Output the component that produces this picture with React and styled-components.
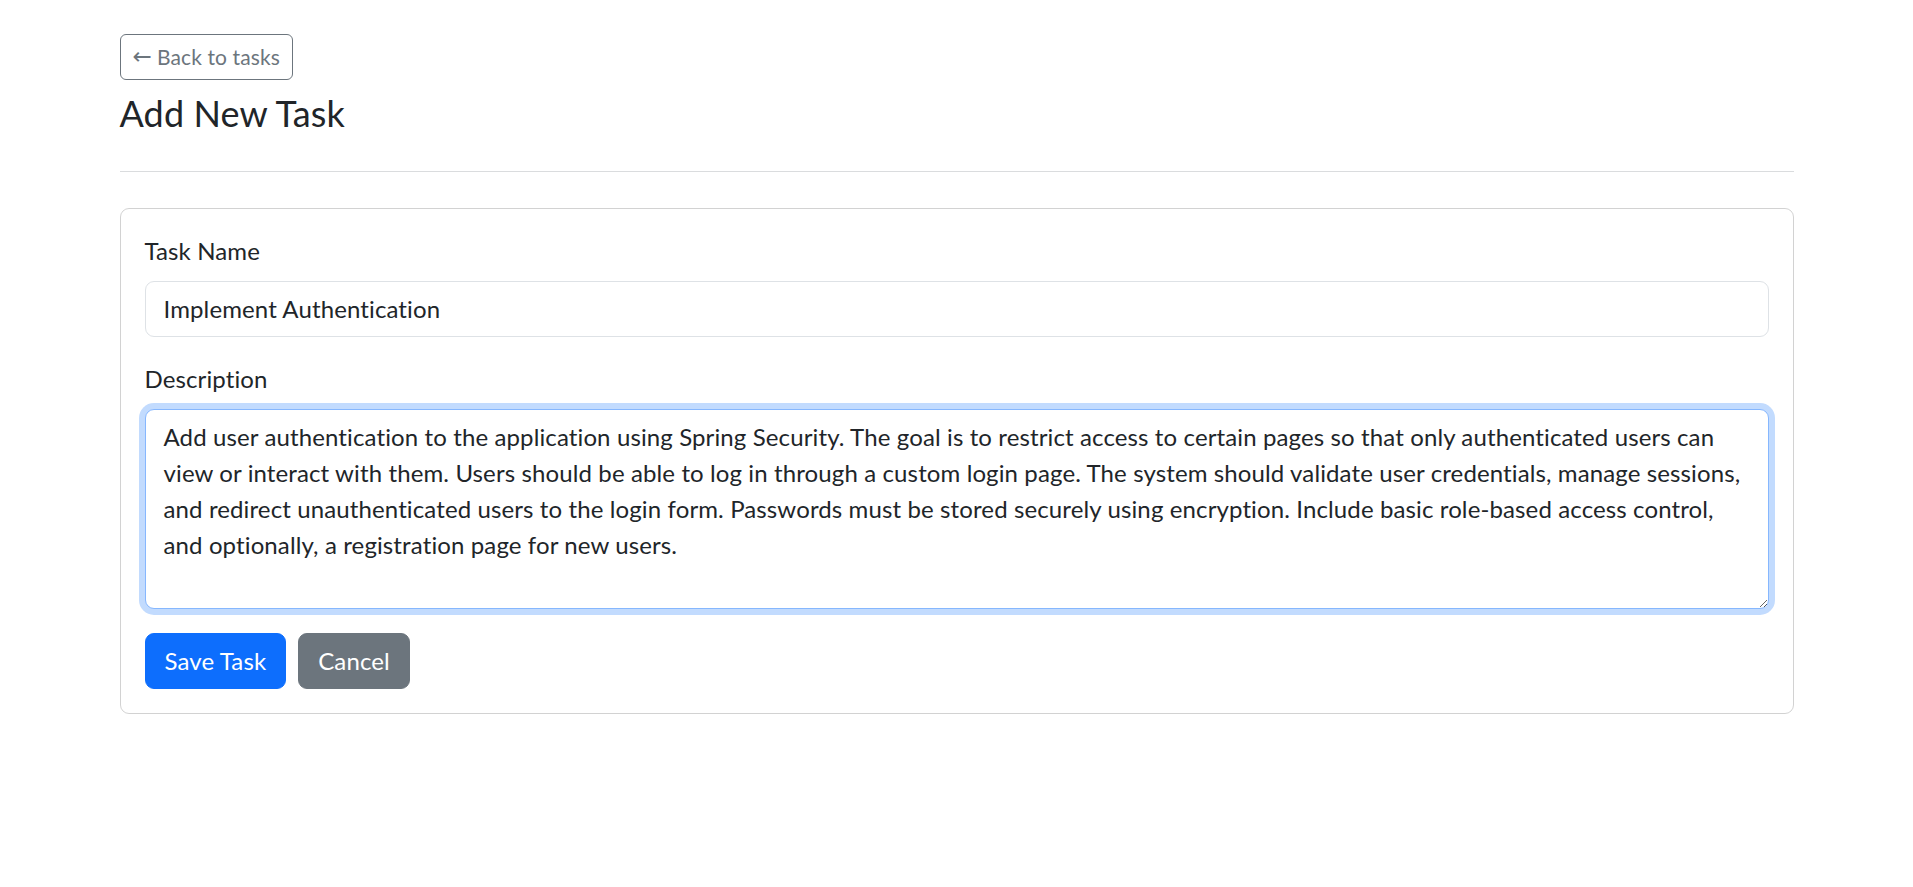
import styled, { createGlobalStyle } from "styled-components";

const GlobalStyle = createGlobalStyle`
  *, *::before, *::after {
    box-sizing: border-box;
  }
  body {
    margin: 0;
    background: #fff;
    color: #212529;
    font-family: Lato, "Liberation Sans", sans-serif;
    font-size: 24px;
    line-height: 1.5;
    letter-spacing: 0.12px;
  }
`;

const Container = styled.div`
  max-width: 1710px;
  margin: 0 auto;
  padding: 34px 18px 0;
`;

const Header = styled.div`
  display: flex;
  flex-direction: column;
  align-items: flex-start;
`;

const BackButton = styled.a`
  display: inline-flex;
  align-items: center;
  gap: 5px;
  padding: 6px 12px;
  font-size: 21px;
  line-height: 1.5;
  color: #6c757d;
  border: 1px solid #6c757d;
  border-radius: 6px;
  text-decoration: none;
  cursor: pointer;
`;

const Arrow = styled.span`
  font-family: "DejaVu Sans", sans-serif;
  font-size: 23px;
  line-height: 1;
`;

const Title = styled.h4`
  margin: 12px 0 0;
  font-size: 36px;
  font-weight: 400;
  line-height: 1.2;
  color: #212529;
`;

const Divider = styled.hr`
  margin: 36px 0;
  border: 0;
  border-top: 1px solid #dadcde;
`;

const Card = styled.div`
  border: 1px solid rgba(0, 0, 0, 0.175);
  border-radius: 9px;
  padding: 24px;
`;

const Form = styled.form`
  display: flex;
  flex-direction: column;
`;

const Field = styled.div`
  display: flex;
  flex-direction: column;
  margin-bottom: 24px;
`;

const Label = styled.label`
  margin-bottom: 12px;
`;

const Input = styled.input`
  display: block;
  width: 100%;
  padding: 9px 18px;
  font: inherit;
  line-height: 1.5;
  letter-spacing: inherit;
  color: #212529;
  background: #fff;
  border: 1px solid #dee2e6;
  border-radius: 9px;
  outline: none;
`;

const TextArea = styled.textarea`
  display: block;
  width: 100%;
  height: 200px;
  padding: 9px 18px;
  font: inherit;
  line-height: 1.5;
  letter-spacing: inherit;
  color: #212529;
  background: #fff;
  border: 1px solid ${(p) => (p.$focused ? "#86b7fe" : "#dee2e6")};
  border-radius: 9px;
  box-shadow: ${(p) => (p.$focused ? "0 0 0 6px rgba(13, 110, 253, 0.25)" : "none")};
  outline: none;
  resize: vertical;
`;

const Actions = styled.div`
  display: flex;
  gap: 12px;
`;

const Button = styled.button`
  padding: 9px 19px;
  font: inherit;
  line-height: 1.5;
  letter-spacing: inherit;
  color: #fff;
  background: ${(p) => (p.$variant === "secondary" ? "#6c757d" : "#0d6efd")};
  border: 1px solid ${(p) => (p.$variant === "secondary" ? "#6c757d" : "#0d6efd")};
  border-radius: 9px;
  cursor: pointer;
`;

const description =
  "Add user authentication to the application using Spring Security. The goal is to restrict access to certain pages so that only authenticated users can view or interact with them. Users should be able to log in through a custom login page. The system should validate user credentials, manage sessions, and redirect unauthenticated users to the login form. Passwords must be stored securely using encryption. Include basic role-based access control, and optionally, a registration page for new users.";

export default function App() {
  return (
    <>
      <GlobalStyle />
      <Container>
        <Header>
          <BackButton href="#">
            <Arrow>←</Arrow>Back to tasks
          </BackButton>
          <Title>Add New Task</Title>
        </Header>
        <Divider />
        <Card>
          <Form onSubmit={(e) => e.preventDefault()}>
            <Field>
              <Label htmlFor="name">Task Name</Label>
              <Input id="name" type="text" defaultValue="Implement Authentication" />
            </Field>
            <Field>
              <Label htmlFor="description">Description</Label>
              <TextArea id="description" $focused defaultValue={description} />
            </Field>
            <Actions>
              <Button type="submit">Save Task</Button>
              <Button type="button" $variant="secondary">
                Cancel
              </Button>
            </Actions>
          </Form>
        </Card>
      </Container>
    </>
  );
}
